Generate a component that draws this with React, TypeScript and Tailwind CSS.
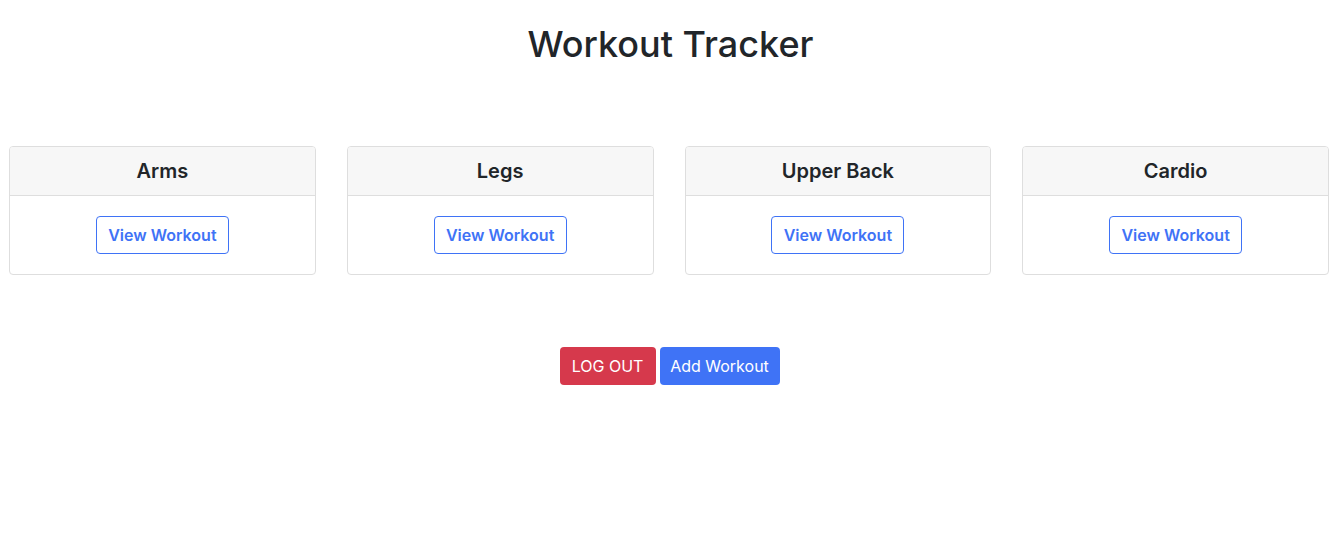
import { useState } from "react";

const categories = ["Arms", "Legs", "Upper Back", "Cardio"];

function WorkoutCard({ name, onView }: { name: string; onView: () => void }) {
  return (
    <div className="border border-[#dedede] rounded-[4px] bg-white overflow-hidden">
      <div className="h-[49px] flex items-center justify-center bg-[#f7f7f7] border-b border-[#dedede]">
        <h5 className="text-[20px] font-semibold text-[#212529]">{name}</h5>
      </div>
      <div className="flex justify-center pt-[20px] pb-[20px]">
        <button
          type="button"
          onClick={onView}
          className="h-[38px] w-[133px] border border-[#3f73f6] rounded-[4px] text-[#3f73f6] text-[16px] font-semibold bg-white hover:bg-[#3f73f6] hover:text-white"
        >
          View Workout
        </button>
      </div>
    </div>
  );
}

export default function App() {
  const [selected, setSelected] = useState<string | null>(null);

  return (
    <div className="min-h-screen bg-white font-['Inter',sans-serif] text-[#212529]">
      <h1 className="pt-[20px] text-center text-[36px] leading-[48px] font-medium">
        Workout Tracker
      </h1>

      <div className="grid grid-cols-4 gap-[31px] pl-[9px] pr-[12px] mt-[78px]">
        {categories.map((c) => (
          <WorkoutCard key={c} name={c} onView={() => setSelected(c)} />
        ))}
      </div>

      <div className="flex justify-center gap-[4px] mt-[72px] pr-[2px]">
        <button
          type="button"
          onClick={() => setSelected(null)}
          className="h-[38px] w-[96px] rounded-[4px] bg-[#d6394c] text-white text-[16px]"
        >
          LOG OUT
        </button>
        <button
          type="button"
          className="h-[38px] w-[120px] rounded-[4px] bg-[#3f73f6] text-white text-[16px]"
        >
          Add Workout
        </button>
      </div>
      {selected && <span className="sr-only">{selected}</span>}
    </div>
  );
}
